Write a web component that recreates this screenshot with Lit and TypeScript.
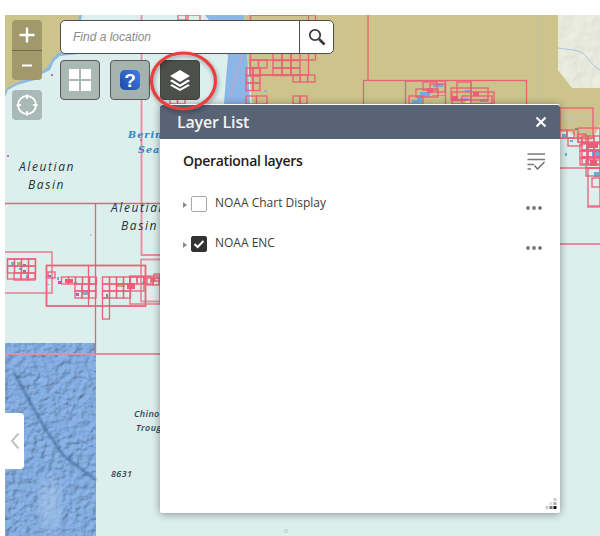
import { LitElement, html, css, svg } from "lit";
import { customElement } from "lit/decorators.js";

type R = [number, number, number, number];
const grid = (x: number, y: number, c: number, r: number, w: number, h: number): R[] => {
  const o: R[] = [];
  for (let j = 0; j < r; j++) for (let i = 0; i < c; i++) o.push([x + i * w, y + j * h, w, h]);
  return o;
};

const strong: R[] = [
  [46.5, 265.5, 99, 40.5],
  [88.5, 265.5, 0.01, 40.5],
  ...grid(7.5, 259, 4, 2, 7, 7),
  ...grid(14, 273, 3, 1, 7, 7),
  [7.5, 259, 28, 20],
  [48, 272, 7, 6],
  ...grid(61.5, 277, 5, 1, 7, 7),
  ...grid(75, 284, 3, 2, 7, 7),
  ...grid(102.5, 277, 4, 3, 7, 7),
  [102.5, 298, 7, 21],
  ...grid(130, 277, 3, 1, 7, 7),
  [130, 277, 14, 14],
  ...grid(147, 278, 2, 1, 6, 7),
  [154, 274, 6, 7],
  // top centre grids
  [250.5, 15, 58, 60],
  [250.5, 15, 65, 45],
  ...grid(250, 60, 2, 1, 8.5, 8),
  ...grid(250, 68, 1, 1, 10, 8),
  ...grid(246, 68, 2, 3, 7, 7.5),
  ...grid(273, 53, 3, 3, 9, 7.5),
  ...grid(293, 75, 3, 1, 7.3, 7),
  [258, 75, 42, 0.01],
  [246, 96, 10.5, 8],
  [256.5, 96, 10.5, 8],
  [293, 96, 7, 8],
  [300, 96, 7, 8],
  [170, 97, 7.5, 7],
  [177.5, 97, 7.5, 7],
  [178, 15, 10, 5],
  [186, 15, 14, 6],
  [363.5, 80.5, 163, 30],
  [368, 15, 0.01, 65],
  [405.5, 81, 40, 30],
  [423, 82, 14, 8],
  [430, 84, 15, 8],
  [416, 89, 22, 8],
  [409, 96, 14, 8],
  [451, 88, 37, 12],
  [457, 82, 14, 18],
  [471, 82, 0.01, 22],
  [452, 92, 42, 12],
  [462, 96, 30, 8],
  // right side
  [560, 108, 33, 30],
  [558, 130, 9, 8],
  [567, 130, 7, 8],
  [568, 138, 14, 8],
  [578, 128, 22, 14],
  [578, 134, 8, 8],
  ...grid(582, 136, 3, 4, 6, 7),
  ...grid(580, 144, 3, 3, 7, 7),
  [586, 160, 14, 8],
  [586, 168, 14, 8],
  [588, 168, 12, 38],
  [592, 178, 8, 9],
  [560, 168, 40, 0.01],
];
const lines: string[] = [
  "M5 203.5 H160",
  "M95.5 203.5 V354",
];
const paleLines: string[] = [
  "M141.5 15 V255 H160",
  "M5 354 H160",
  "M560 244 H600",
  "M587 207 H600",
];
const pale: R[] = [
  [3, 252, 49, 41],
  [141, 259.5, 30, 42],
  [46.5, 265.5, 99, 40.5],
  [130, 276, 30, 28],
];

const blueDots: [number, number, number, number, string][] = [
  [11, 262, 4, 3, "#7da8e0"], [17, 262, 4, 3, "#b4b06e"], [23, 264, 3, 3, "#e0508a"],
  [19, 268, 3, 2, "#6fa8e8"], [23, 270, 3, 4, "#d24fb0"], [26, 275, 3, 3, "#6fa8e8"],
  [48, 275, 3, 2, "#b060d0"], [57, 277, 2, 3, "#6fa8e8"], [58, 281, 3, 3, "#c050c0"],
  [65, 279, 8, 4, "#ee5a78"], [74, 282, 3, 3, "#6fa8e8"], [83, 290, 5, 5, "#80a8d0"],
  [76, 293, 3, 3, "#d050c0"], [47, 284, 2, 1, "#6fa8e8"], [90, 283, 2, 1, "#6fa8e8"],
  [117, 283, 8, 4, "#b4b06e"], [127, 283, 8, 6, "#ee5a78"], [140, 282, 5, 2, "#7da8e0"],
  [150, 279, 6, 3, "#b4b06e"], [156, 276, 4, 3, "#8fa8c0"], [106, 294, 2, 3, "#888"],
  [264, 90, 3, 2, "#86b4ec"],
  // north-east clusters
  [420, 92, 10, 5, "#74a8e8"], [433, 84, 10, 3, "#74a8e8"], [427, 88, 6, 5, "#ee5a78"],
  [417, 97, 5, 4, "#74a8e8"], [432, 95, 14, 1, "#74a8e8"], [412, 100, 10, 3, "#74a8e8"],
  [452, 96, 6, 5, "#ee5a78"], [460, 98, 8, 3, "#74a8e8"], [473, 92, 6, 4, "#ee5a78"],
  [465, 90, 6, 2, "#74a8e8"], [480, 99, 8, 3, "#74a8e8"], [466, 100, 4, 3, "#e8e8e8"],
  // south-east
  [562, 134, 5, 3, "#6aa8e8"], [570, 140, 3, 2, "#6aa8e8"], [565, 153, 2, 3, "#6aa8e8"],
  [586, 142, 12, 6, "#ee5a78"], [592, 150, 8, 8, "#6aa8e8"], [583, 156, 5, 3, "#6aa8e8"],
  [590, 160, 7, 6, "#ee5a78"], [594, 172, 5, 5, "#6aa8e8"], [575, 128, 3, 2, "#5aa060"],
];

@customElement("map-canvas")
class MapCanvas extends LitElement {
  static styles = css`
    :host { display: block; }
    svg { display: block; width: 600px; height: 536px; }
    .lbl { font-family: "Open Sans", sans-serif; font-style: italic; font-weight: 500; font-size: 12px; letter-spacing: 1.6px; fill: #26323a; }
    .sea { font-family: "DejaVu Serif", serif; font-style: italic; font-weight: 700; font-size: 9.5px; letter-spacing: 1.1px; fill: #2f86c6; }
    .small { font-family: "Open Sans", sans-serif; font-style: italic; font-weight: 600; font-size: 9px; letter-spacing: .4px; fill: #333f48; }
    .s { fill: none; stroke: #ec5f79; stroke-width: 1.3; }
    .p { fill: none; stroke: #e88d9e; stroke-width: 1.8; }
  `;
  render() {
    return html`<svg viewBox="0 0 600 536" xmlns="http://www.w3.org/2000/svg">
      <defs>
        <clipPath id="frame"><rect x="5" y="15" width="595" height="521" /></clipPath>
        <filter id="relief" x="0" y="0" width="100%" height="100%">
          <feTurbulence type="fractalNoise" baseFrequency=".14 .16" numOctaves="3" seed="7" result="n" />
          <feDiffuseLighting in="n" surfaceScale="2.2" diffuseConstant="1.1" lighting-color="#85afe2" result="l">
            <feDistantLight azimuth="225" elevation="60" />
          </feDiffuseLighting>
        </filter>
        <filter id="terrain" x="0" y="0" width="100%" height="100%">
          <feTurbulence type="fractalNoise" baseFrequency=".05" numOctaves="4" seed="3" />
          <feDiffuseLighting surfaceScale="1" diffuseConstant="1.14" lighting-color="#e6e8dc">
            <feDistantLight azimuth="225" elevation="62" />
          </feDiffuseLighting>
        </filter>
        <filter id="soft"><feGaussianBlur stdDeviation=".9" /></filter>
        <filter id="soft2"><feGaussianBlur stdDeviation="7" /></filter>
      </defs>
      <g clip-path="url(#frame)">
      <rect x="5" y="15" width="595" height="521" fill="#dcefec" />
      <rect x="5" y="343" width="91" height="193" fill="#6f9bd2" filter="url(#relief)" />
      <path d="M14 372 L30 402 L46 430 L64 456 L96 480" fill="none" stroke="#35618f" stroke-width="2" filter="url(#soft)" opacity=".8" />
      <ellipse cx="50" cy="505" rx="10" ry="26" fill="#b6d2f2" opacity=".55" filter="url(#soft2)" />
      <path d="M5 97 L8 90 L17 85 L24 83 L35 80 L42 74 L50 70 L54 61 L60 56 L78 54 L84 50 L88 38 L80 25 L82 15 L5 15 Z" fill="#8eb8e6" />
      <path d="M5 94 L7 88 L16 83 L24 80 L35 77 L41 72 L48 67 L52 59 L58 53 L76 51 L82 47 L85 37 L77 25 L79 15 L5 15 Z" fill="#cdc48b" />
      <path d="M205 15 H244 L247 50 L250 104 H224 L226 78 L228 56 L212 24 Z" fill="#8ab6e8" />
      <path d="M242 55 L230 100" fill="none" stroke="#b3a8d8" stroke-width="2" />
      <path d="M244 15 H600 V125 L592 140 H580 L570 132 H558 V104 H252 L248 60 Z" fill="#cdc48b" />
      <rect x="558" y="15" width="42" height="73" fill="#e3e6da" filter="url(#terrain)" />
      <path d="M558 70 L572 88 H558 Z" fill="#cdc48b" />
      <path d="M558 48 C568 50 578 49 584 54 C588 58 592 66 600 70" fill="none" stroke="#a5c6e6" stroke-width="1" />
      <path d="M539 15 V104" stroke="#c2c0ac" stroke-width="1.6" stroke-dasharray="5 1" fill="none" />
      <path d="M560 117 H600 M578 125 L566 118 M578 134 L590 126" stroke="#c3c3b5" stroke-width="1.4" fill="none" />
      ${blueDots.map(([x, y, w, h, c]) => svg`<rect x=${x} y=${y} width=${w} height=${h} fill=${c} />`)}
      ${paleLines.map((d) => svg`<path class="p" d=${d} />`)}
      ${pale.map(([x, y, w, h]) => svg`<rect class="p" x=${x} y=${y} width=${w} height=${h} />`)}
      ${lines.map((d) => svg`<path class="s" d=${d} />`)}
      ${strong.map(([x, y, w, h]) => svg`<rect class="s" x=${x} y=${y} width=${w} height=${h} />`)}
      <circle cx="52" cy="75" r="1" fill="#b33cb3" /><circle cx="8" cy="156" r="1" fill="#b33cb3" />
      <circle cx="75" cy="81" r="1" fill="#b33cb3" /><circle cx="141" cy="140" r="1" fill="#c0508a" />
      <circle cx="91" cy="235" r=".7" fill="#6fa8e8" /><circle cx="286" cy="531" r="1.6" fill="none" stroke="#b5cfcd" />
      <text class="lbl" x="19" y="171">Aleutian</text>
      <text class="lbl" x="28" y="189">Basin</text>
      <text class="lbl" x="111" y="212">Aleutian</text>
      <text class="lbl" x="121" y="230">Basin</text>
      <text class="sea" x="128" y="138">Bering</text>
      <text class="sea" x="138" y="153">Sea</text>
      <text class="small" x="134" y="417">Chinook</text>
      <text class="small" x="136" y="431">Trough</text>
      <text class="small" x="111" y="477">8631</text>
      </g>
    </svg>`;
  }
}

@customElement("layer-row")
class LayerRow extends LitElement {
  static properties = { label: {}, checked: { type: Boolean } };
  label = "";
  checked = false;
  static styles = css`
    :host { display: flex; align-items: flex-start; height: 40px; padding-left: 23px; padding-right: 18px; }
    .tri { width: 0; height: 0; border-left: 4px solid #8a8a8a; border-top: 3.5px solid transparent; border-bottom: 3.5px solid transparent; margin: 6px 4px 0 0; }
    .box { box-sizing: border-box; width: 16px; height: 16px; border: 1px solid #a8a8a8; border-radius: 2px; display: flex; align-items: center; justify-content: center; }
    .box.on { background: #323232; border-color: #323232; }
    .name { flex: 1; margin-left: 8px; margin-top: -1px; font: 12px/16px "Open Sans", sans-serif; color: #3c3c3c; }
    .more { margin-top: 10px; display: block; }
    svg { display: block; }
  `;
  render() {
    return html`<span class="tri"></span>
      <span class="box ${this.checked ? "on" : ""}">
        ${this.checked ? html`<svg width="12" height="10" viewBox="0 0 12 10"><path d="M1.5 5 L4.6 8 L10.5 2" fill="none" stroke="#fff" stroke-width="2" /></svg>` : ""}
      </span>
      <span class="name">${this.label}</span>
      <svg class="more" width="16" height="4" viewBox="0 0 16 4"><circle cx="2" cy="2" r="1.9" fill="#777" /><circle cx="8" cy="2" r="1.9" fill="#777" /><circle cx="14" cy="2" r="1.9" fill="#777" /></svg>`;
  }
}

@customElement("app-root")
class AppRoot extends LitElement {
  static styles = css`
    :host { display: block; position: relative; width: 600px; height: 536px; overflow: hidden; background: #fff; font-family: "Open Sans", sans-serif; }
    .over { position: absolute; }
    svg { display: block; }
    .zoom { left: 12px; top: 20px; width: 30px; height: 60px; border-radius: 4px; background: #a1996c; display: flex; flex-direction: column; }
    .zoom span { flex: 1; display: flex; align-items: center; justify-content: center; }
    .zoom span + span { border-top: 1px solid #6f6a4a; }
    .locate { left: 12px; top: 90px; width: 30px; height: 30px; border-radius: 4px; background: #a9b9b5; display: flex; align-items: center; justify-content: center; }
    .search { left: 60px; top: 20px; width: 274px; height: 34px; box-sizing: border-box; display: flex; background: #fff; border: 1px solid #4f4f4f; border-radius: 5px; }
    .ph { flex: 1; padding-left: 12px; font: italic 12px/33px "Liberation Sans", sans-serif; color: #8a8a8a; }
    .go { width: 33px; border-left: 1px solid #4f4f4f; display: flex; align-items: center; justify-content: center; }
    .tools { left: 60px; top: 60px; display: flex; gap: 10px; }
    .tool { box-sizing: border-box; width: 40px; height: 40px; border: 1px solid #5a5a5a; border-radius: 4px; background: #a9b8b3; display: flex; align-items: center; justify-content: center; }
    .tool.help { background: #a5b3ae; }
    .tool.dark { background: #4c4f4b; border-color: #44463f; }
    .ring { left: 150px; top: 51px; pointer-events: none; filter: drop-shadow(1px 2px 2px rgba(0, 0, 0, .35)); z-index: 3; }
    .tab { left: 5px; top: 413px; width: 19px; height: 56px; background: #fff; border-radius: 0 4px 4px 0; display: flex; align-items: center; justify-content: center; }
    .panel { left: 160px; top: 104px; width: 400px; height: 409px; background: #fff; border-radius: 3px 3px 2px 2px; box-shadow: 0 1px 9px rgba(0, 0, 0, .4); display: flex; flex-direction: column; z-index: 2; }
    .head { height: 35px; background: #586376; border-top: 1px solid #fff; border-radius: 3px 3px 0 0; box-sizing: border-box; display: flex; align-items: center; justify-content: space-between; padding: 0 13px 0 17px; }
    .title { font: 600 16px/1 "Open Sans", sans-serif; color: #f2f3f5; letter-spacing: -.2px; }
    .sub { display: flex; align-items: center; justify-content: space-between; height: 44px; padding: 0 15px 0 23px; }
    .sub b { font: 600 14px/1 "Open Sans", sans-serif; letter-spacing: -.3px; color: #1c1c1c; }
    .rows { padding-top: 13px; flex: 1; }
    .grip { display: flex; justify-content: flex-end; padding: 0 3px 3px 0; }
  `;
  render() {
    return html`
      <map-canvas></map-canvas>
      <div class="over zoom">
        <span><svg width="16" height="16" viewBox="0 0 16 16"><path d="M8 0.5V15.5M0.5 8H15.5" stroke="#fff" stroke-width="2.4" /></svg></span>
        <span><svg width="12" height="3" viewBox="0 0 12 3"><path d="M1 1.5H11" stroke="#fff" stroke-width="2" /></svg></span>
      </div>
      <div class="over locate">
        <svg width="22" height="22" viewBox="0 0 22 22" fill="none" stroke="#fff" stroke-width="1.8"><circle cx="11" cy="11" r="9" /><path d="M11 0.5V5M11 17V21.5M0.5 11H5M17 11H21.5" /></svg>
      </div>
      <div class="over search">
        <div class="ph">Find a location</div>
        <div class="go"><svg width="18" height="18" viewBox="0 0 18 18" fill="none"><circle cx="7" cy="7" r="5.2" stroke="#3a3f46" stroke-width="1.8" /><path d="M11 11L16.5 16.5" stroke="#33383e" stroke-width="2.6" /></svg></div>
      </div>
      <div class="over tools">
        <div class="tool"><svg width="22" height="22" viewBox="0 0 22 22" fill="#fff"><rect width="10" height="10" /><rect x="12" width="10" height="10" /><rect y="12" width="10" height="10" /><rect x="12" y="12" width="10" height="10" /></svg></div>
        <div class="tool help"><svg width="22" height="22" viewBox="0 0 22 22"><defs><linearGradient id="hg" x1="1" y1="0" x2="0" y2="1"><stop offset="0" stop-color="#3f7fe0" /><stop offset="1" stop-color="#1d49a8" /></linearGradient></defs><rect x="1" y="1" width="20" height="20" rx="5" fill="url(#hg)" /><text x="11" y="18" text-anchor="middle" font-family="Liberation Sans, sans-serif" font-weight="700" font-size="19" fill="#fff">?</text></svg></div>
        <div class="tool dark"><svg width="22" height="22" viewBox="0 0 22 22" fill="#fff"><path d="M11 1 L21 7 L11 13 L1 7 Z" /><path d="M3 10.6 L1 12 L11 18 L21 12 L19 10.6 L11 15.4 Z" /><path d="M3 15.2 L1 16.4 L11 22 L21 16.4 L19 15.2 L11 19.8 Z" /></svg></div>
      </div>
      <svg class="over ring" width="68" height="60" viewBox="0 0 68 60"><ellipse cx="33.5" cy="30" rx="32" ry="28" fill="none" stroke="#ea3f40" stroke-width="3.2" /></svg>
      <div class="over tab"><svg width="10" height="18" viewBox="0 0 10 18"><path d="M8.5 1.5 L2 9 L8.5 16.5" fill="none" stroke="#c2c2c2" stroke-width="2" /></svg></div>
      <section class="over panel">
        <div class="head">
          <span class="title">Layer List</span>
          <svg width="12" height="12" viewBox="0 0 12 12"><path d="M1.5 1.5L10.5 10.5M10.5 1.5L1.5 10.5" stroke="#fff" stroke-width="2.2" /></svg>
        </div>
        <div class="sub">
          <b>Operational layers</b>
          <svg width="18" height="17" viewBox="0 0 18 17" fill="none" stroke="#7a7a7a" stroke-width="1.4"><path d="M0.5 1H18M0.5 6.5H18M0.5 11.5H7M0.5 16H4" /><path d="M7.5 12.5L10.5 16L17.5 9" stroke="#6a6a6a" /></svg>
        </div>
        <div class="rows">
          <layer-row label="NOAA Chart Display"></layer-row>
          <layer-row label="NOAA ENC" checked></layer-row>
        </div>
        <div class="grip"><svg width="12" height="12" viewBox="0 0 12 12"><rect x="8.5" y="0" width="3" height="3" fill="#ccc" /><rect x="4.5" y="4" width="3" height="3" fill="#ddd" /><rect x="8.5" y="4" width="3" height="3" fill="#aaa" /><rect x="0.5" y="8" width="3" height="3" fill="#ccc" /><rect x="4.5" y="8" width="3" height="3" fill="#777" /><rect x="8.5" y="8" width="3" height="3" fill="#111" /></svg></div>
      </section>`;
  }
}
